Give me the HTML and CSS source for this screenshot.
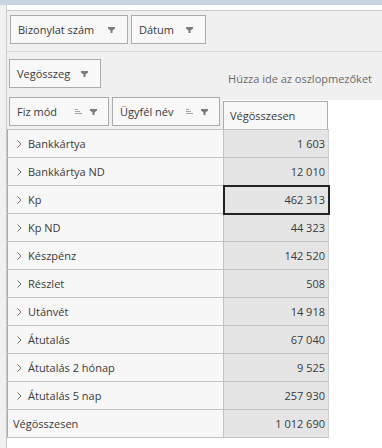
FILE: index.html
```html
<!DOCTYPE html>
<html lang="hu">

<head>
    <meta charset="UTF-8">
    <meta name="viewport" content="width=device-width, initial-scale=1.0">
    <title>Kimutatás</title>
    <link rel="stylesheet" href="styles.css">
</head>

<body>
    <div class="titlebar"></div>
    <div class="main">
        <div class="side"></div>
        <div class="content">
            <div class="panel">
                <div class="filter-area">
                    <div class="field w-biz">
                        <span>Bizonylat szám</span>
                        <span class="icons"><svg class="ico-filter" width="7" height="6" viewBox="0 0 7 6"><path d="M0 0H7V1.5L4.5 3.5V6H2.5V3.5L0 1.5Z" /></svg></span>
                    </div>
                    <div class="field w-date">
                        <span>Dátum</span>
                        <span class="icons"><svg class="ico-filter" width="7" height="6" viewBox="0 0 7 6"><path d="M0 0H7V1.5L4.5 3.5V6H2.5V3.5L0 1.5Z" /></svg></span>
                    </div>
                </div>
                <div class="data-area">
                    <div class="field w-sum">
                        <span>Vegösszeg</span>
                        <span class="icons"><svg class="ico-filter" width="7" height="6" viewBox="0 0 7 6"><path d="M0 0H7V1.5L4.5 3.5V6H2.5V3.5L0 1.5Z" /></svg></span>
                    </div>
                    <span class="hint">Húzza ide az oszlopmezőket</span>
                </div>
            </div>

            <div class="header-row">
                <div class="row-fields">
                    <div class="field w-fiz">
                        <span>Fiz mód</span>
                        <span class="icons">
                            <svg class="ico-sort" width="7" height="7" viewBox="0 0 7 7"><path d="M0 1.5H3M0 3.5H5M0 5.5H7" /></svg>
                            <svg class="ico-filter" width="7" height="6" viewBox="0 0 7 6"><path d="M0 0H7V1.5L4.5 3.5V6H2.5V3.5L0 1.5Z" /></svg>
                        </span>
                    </div>
                    <div class="field w-ugy">
                        <span>Ügyfél név</span>
                        <span class="icons">
                            <svg class="ico-sort" width="7" height="7" viewBox="0 0 7 7"><path d="M0 1.5H3M0 3.5H5M0 5.5H7" /></svg>
                            <svg class="ico-filter" width="7" height="6" viewBox="0 0 7 6"><path d="M0 0H7V1.5L4.5 3.5V6H2.5V3.5L0 1.5Z" /></svg>
                        </span>
                    </div>
                </div>
                <div class="col-head">Végösszesen</div>
            </div>

            <table class="pivot">
                <colgroup>
                    <col class="c-label">
                    <col class="c-value">
                </colgroup>
                <tbody id="rows"></tbody>
                <tfoot>
                    <tr>
                        <td class="label total">Végösszesen</td>
                        <td class="value">1 012 690</td>
                    </tr>
                </tfoot>
            </table>
        </div>
    </div>
    <script>
        const rows = [
            ["Bankkártya", "1 603"],
            ["Bankkártya ND", "12 010"],
            ["Kp", "462 313"],
            ["Kp ND", "44 323"],
            ["Készpénz", "142 520"],
            ["Részlet", "508"],
            ["Utánvét", "14 918"],
            ["Átutalás", "67 040"],
            ["Átutalás 2 hónap", "9 525"],
            ["Átutalás 5 nap", "257 930"]
        ];

        const chevron = '<svg class="chev" width="5" height="8" viewBox="0 0 5 8"><path d="M0.5 0.5L4 4L0.5 7.5" /></svg>';
        const body = document.getElementById("rows");

        rows.forEach(function (r, i) {
            const tr = document.createElement("tr");
            const sel = i === 2 ? " selected" : "";
            tr.innerHTML = '<td class="label">' + chevron + '<span>' + r[0] + '</span></td>' +
                '<td class="value' + sel + '">' + r[1] + '</td>';
            body.appendChild(tr);
        });
    </script>
</body>

</html>
```

FILE: styles.css
```css
body {
    margin: 0;
    font-family: "Open Sans", "Noto Sans", sans-serif;
    font-size: 11px;
    color: #3a3a3a;
    background: #fff;
}

.titlebar {
    height: 5px;
    background: #cad4e0;
}

.main {
    display: flex;
    height: 443px;
}

.side {
    width: 6px;
    background: #f0f0f0;
    border-right: 1px solid #c9c9c9;
}

.content {
    flex: 1;
}

.panel {
    margin-top: 5px;
    background: #f0f0f0;
    border-top: 1px solid #cacaca;
}

.filter-area {
    display: flex;
    gap: 3px;
    padding: 4px 0 7px 3px;
    border-bottom: 1px solid #d6d6d6;
}

.data-area {
    display: flex;
    justify-content: space-between;
    align-items: flex-end;
    height: 48px;
    box-sizing: border-box;
    padding: 7px 10px 12px 2px;
}

.hint {
    color: #6b6b6b;
    padding-bottom: 2px;
}

.field {
    display: flex;
    justify-content: space-between;
    align-items: center;
    height: 29px;
    box-sizing: border-box;
    padding: 0 12px 0 7px;
    background: #f8f8f8;
    border: 1px solid #ababab;
}

.icons {
    display: flex;
    align-items: center;
    gap: 8px;
}

.ico-filter path {
    fill: #7b7b7b;
}

.ico-sort path {
    stroke: #a4a4a4;
    stroke-width: 1;
}

.w-biz { width: 118px; }
.w-date { width: 75px; }
.w-sum { width: 92px; }
.w-fiz { width: 100px; padding-right: 11px; }
.w-ugy { width: 108px; padding-right: 11px; }

.header-row {
    display: flex;
    align-items: flex-end;
    height: 29px;
}

.row-fields {
    display: flex;
    gap: 3px;
    width: 216px;
    height: 32px;
    box-sizing: border-box;
    margin-top: -3px;
    padding-left: 2px;
    background: #f0f0f0;
}

.col-head {
    width: 105px;
    height: 28px;
    box-sizing: border-box;
    padding-left: 6px;
    line-height: 28px;
    background: #f8f8f8;
    border: 1px solid #ababab;
    border-bottom: none;
}

.pivot {
    border-collapse: collapse;
    table-layout: fixed;
    width: 321px;
}

.c-label { width: 216px; }
.c-value { width: 105px; }

.pivot td {
    height: 27px;
    padding: 0;
    border: 1px solid #c3c3c3;
}

.pivot td.label {
    background: #f7f7f7;
    padding-left: 9px;
    border-left-color: #a9a9a9;
}

.pivot td.label span {
    margin-left: 6px;
}

.pivot td.total {
    padding-left: 5px;
}

.pivot td.value {
    background: #e5e5e5;
    text-align: right;
    padding-right: 3px;
    border-right-color: #cfcfcf;
}

.pivot td.selected {
    outline: 2px solid #222;
    outline-offset: -1px;
}

.chev path {
    fill: none;
    stroke: #6e6e6e;
    stroke-width: 1;
}
```
